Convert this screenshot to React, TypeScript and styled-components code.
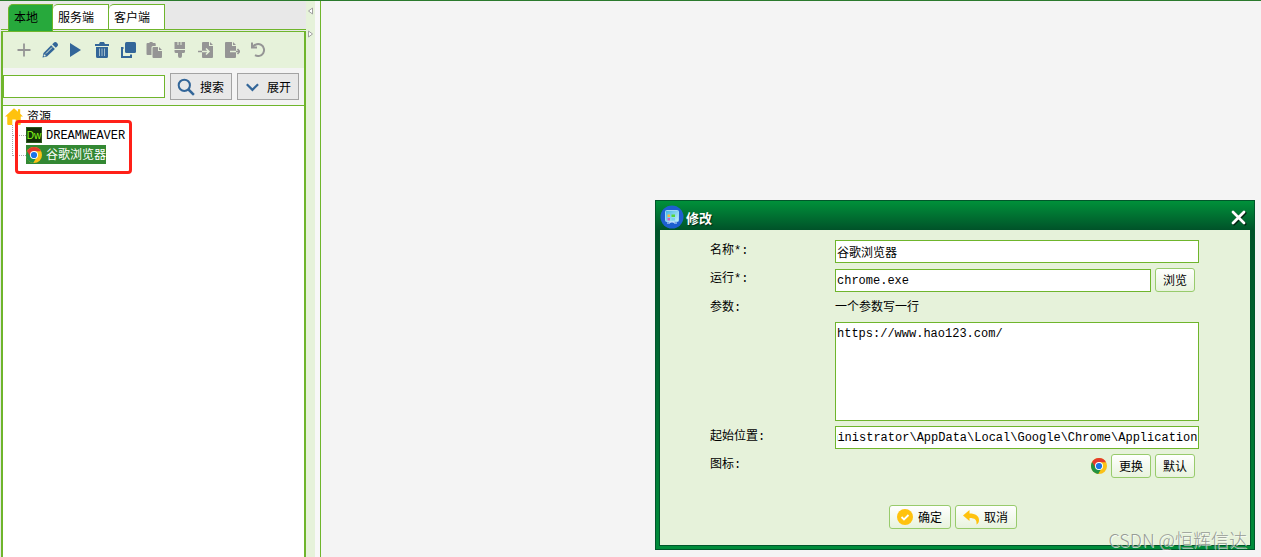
import React, { useEffect, useRef } from "react";
import styled, { createGlobalStyle } from "styled-components";

const GREEN = "#6fb52c";
const PALE = "#e6f2da";
const BLUE = "#336699";
const GREY = "#959595";
const YELLOW = "#ffc20e";

const Global = createGlobalStyle`
  * { box-sizing: border-box; }
  html, body, #root { height: 100%; }
  body {
    margin: 0;
    background: #f4f4f4;
    overflow: hidden;
  }
  body, button, input, textarea {
    font-family: "Liberation Mono", "Noto Sans CJK SC", monospace;
    font-size: 12px;
    color: #000;
  }
  button, input, textarea { margin: 0; border-radius: 0; outline: none; }
`;

const Screen = styled.div`
  display: flex;
  height: 100%;
  min-height: 100vh;
  border-top: 1px solid #2b7a2d;
  position: relative;
`;

const Sidebar = styled.aside`
  flex: 0 0 306px;
  display: flex;
  flex-direction: column;
  padding-left: 1px;
  background: #e8e8e8;
`;

const Tabs = styled.div`
  display: flex;
  height: 29px;
  padding: 3px 0 0 7px;
  border-bottom: 1px solid ${GREEN};
`;

const Tab = styled.button<{ $active?: boolean }>`
  width: ${(p) => (p.$active ? 45 : 56)}px;
  height: ${(p) => (p.$active ? 27 : 25)}px;
  padding: ${(p) => (p.$active ? 1 : 3)}px 0 0 5px;
  text-align: left;
  border: 1px solid ${GREEN};
  border-left-width: ${(p) => (p.$active ? 1 : 0)}px;
  border-bottom: 0;
  border-top-left-radius: 5px;
  background: ${(p) => (p.$active ? "#27a93c" : "#fff")};
  line-height: 20px;
`;

const Panel = styled.section`
  flex: 1;
  display: flex;
  flex-direction: column;
  margin-top: 1px;
  border: solid ${GREEN};
  border-width: 1px 2px 0;
  background: #f4f4f4;
`;

const Toolbar = styled.div`
  display: flex;
  align-items: center;
  height: 36px;
  padding-left: 8px;
  background: ${PALE};
`;

const ToolButton = styled.button`
  display: flex;
  align-items: center;
  justify-content: center;
  width: 26px;
  height: 26px;
  padding: 0;
  border: 0;
  background: none;
`;

const SearchRow = styled.div`
  display: flex;
  align-items: center;
  gap: 5px;
  height: 37px;
  padding-right: 5px;
`;

const TextInput = styled.input`
  flex: 1;
  min-width: 0;
  width: 100%;
  height: 23px;
  padding: 0 1px;
  border: 1px solid ${GREEN};
  background: #fff;
`;

const GreyButton = styled.button`
  display: flex;
  align-items: center;
  gap: 5px;
  width: 62px;
  height: 27px;
  padding: 0 0 0 6px;
  border: 1px solid #a3a3a3;
  background: #e8e8e8;
`;

const Tree = styled.div`
  position: relative;
  flex: 1;
  padding-left: 1px;
  border-top: 1px solid ${GREEN};
  background: #fff;
`;

const TreeRoot = styled.div`
  display: flex;
  align-items: center;
  gap: 4px;
  height: 19px;
  padding-left: 1px;
`;

const TreeList = styled.ul`
  list-style: none;
  margin: 0 0 0 8px;
  padding: 0;
`;

const TreeItem = styled.li`
  display: flex;
  height: 20px;
  &::before {
    content: "";
    width: 13px;
    height: 20px;
    margin-top: -10px;
    border: dotted #a8a8a8;
    border-width: 0 0 1px 1px;
  }
  &:first-child::before {
    height: 10px;
    margin-top: 0;
  }
`;

const TreeLabel = styled.span<{ $selected?: boolean }>`
  display: flex;
  align-items: center;
  gap: 4px;
  height: 19px;
  line-height: 19px;
  color: ${(p) => (p.$selected ? "#fff" : "#000")};
  background: ${(p) => (p.$selected ? "#338833" : "transparent")};
`;

const TreeText = styled.span`
  padding-top: 3px;
`;

const Marker = styled.div`
  position: absolute;
  left: 12px;
  top: 14px;
  width: 117px;
  height: 54px;
  border: 3px solid #ff2018;
  border-radius: 4px;
`;

const Splitter = styled.div`
  flex: 0 0 15px;
  display: flex;
  flex-direction: column;
  align-items: flex-start;
  gap: 15px;
  padding: 6px 0 0 1px;
  border-right: 1px solid ${GREEN};
  background: linear-gradient(90deg, ${PALE} 9px, #f8f8f8 9px);
`;

const SplitButton = styled.button`
  display: flex;
  width: 7px;
  height: 8px;
  padding: 0;
  border: 0;
  background: none;
`;

const Workspace = styled.main`
  flex: 1;
  min-width: 0;
  background: #f4f4f4;
`;

const Dialog = styled.section`
  position: absolute;
  right: 6px;
  top: 199px;
  width: 600px;
  border: 1px solid #00562a;
  background: linear-gradient(#00913a, #005229 29px, #006831 150px, #008c3a 100%);
  padding: 0 3px 3px;
`;

const TitleBar = styled.header`
  display: flex;
  align-items: center;
  gap: 2px;
  height: 29px;
  padding: 3px 4px 0 1px;
`;

const Title = styled.h1`
  flex: 1;
  margin: 0;
  font-size: 13px;
  font-weight: 700;
  color: #fff;
  text-shadow: 1px 1px 1px #002a14;
`;

const CloseButton = styled.button`
  display: flex;
  padding: 1px 0 0;
  border: 0;
  background: none;
`;

const Form = styled.form`
  display: flex;
  flex-direction: column;
  padding: 10px 51px 16px 50px;
  border: 1px solid #00562a;
  border-top: 0;
  background: ${PALE};
`;

const Row = styled.div`
  display: grid;
  grid-template-columns: 125px 1fr;
  align-items: start;
  padding-bottom: 5px;
`;

const Label = styled.label`
  line-height: 22px;
`;

const Field = styled.div<{ $end?: boolean }>`
  display: flex;
  align-items: flex-end;
  justify-content: ${(p) => (p.$end ? "flex-end" : "flex-start")};
  gap: 4px;
  padding-right: ${(p) => (p.$end ? 4 : 0)}px;
`;

const Stack = styled.div`
  display: flex;
  flex-direction: column;
  gap: 3px;
`;

const Hint = styled.span`
  line-height: 22px;
`;

const TextArea = styled.textarea`
  display: block;
  width: 100%;
  height: 99px;
  padding: 4px 1px;
  border: 1px solid ${GREEN};
  background: #fff;
  line-height: 14px;
  resize: none;
`;

const Button = styled.button<{ $wide?: boolean }>`
  display: flex;
  align-items: center;
  justify-content: center;
  gap: 5px;
  width: ${(p) => (p.$wide ? 62 : 40)}px;
  height: 24px;
  padding: 0;
  border: 1px solid #98cb6c;
  border-radius: 3px;
  background: linear-gradient(#ffffff, #e8f3dd);
`;

const IconSlot = styled.span`
  display: flex;
  align-self: center;
`;

const Actions = styled.div`
  display: flex;
  justify-content: center;
  gap: 4px;
  padding: 22px 4px 0 0;
`;

const Watermark = styled.div`
  position: absolute;
  right: 14px;
  bottom: 5px;
  font-family: "Noto Sans CJK SC", sans-serif;
  font-size: 18px;
  font-weight: 300;
  line-height: 26px;
  color: rgba(140, 145, 140, 0.9);
  text-shadow: 1px 1px 0 rgba(255, 255, 255, 0.7);
  white-space: nowrap;
`;

const Icon = ({ children, size = 16 }: { children: React.ReactNode; size?: number }) => (
  <svg width={size} height={size} viewBox="0 0 16 16" fill="none" aria-hidden="true">
    {children}
  </svg>
);

const Chrome = () => (
  <Icon>
    <circle cx="8" cy="8" r="8" fill="#fbc116" />
    <path d="M8 8 1.07 4A8 8 0 0 0 7.2 15.96L11 9.6z" fill="#229342" />
    <path d="M1.07 4A8 8 0 0 1 14.93 4.2H8L4.6 10z" fill="#e33b2e" />
    <circle cx="8" cy="8" r="4" fill="#fff" />
    <circle cx="8" cy="8" r="3.1" fill="#1a73e8" />
  </Icon>
);

const Dreamweaver = () => (
  <svg width="16" height="16" viewBox="0 0 16 16" aria-hidden="true">
    <rect x="0.5" y="0.5" width="15" height="15" fill="#123009" stroke="#2c5a1c" />
    <text x="8" y="11.5" textAnchor="middle" fontFamily="Liberation Sans, sans-serif" fontSize="10" fill="#8cff1a">
      Dw
    </text>
  </svg>
);

const AppLogo = () => (
  <svg width="24" height="24" viewBox="0 0 24 24" aria-hidden="true">
    <defs>
      <linearGradient id="screen" x1="0" y1="0" x2="1" y2="1">
        <stop offset="0" stopColor="#3fb4e8" />
        <stop offset="1" stopColor="#c8f2f4" />
      </linearGradient>
    </defs>
    <circle cx="12" cy="12" r="11.5" fill="#1e5fd0" />
    <rect x="5.5" y="5.5" width="13" height="11" rx="1" fill="url(#screen)" stroke="#9fd8f5" />
    <path d="M7 18h3v-1h4v1h3" stroke="#d6ecff" strokeWidth="1" fill="none" />
    <rect x="7.5" y="9.5" width="2.5" height="2.5" fill="#ffb43a" />
    <rect x="11.5" y="9.500" width="3.500" height="2.500" fill="#54d636" />
    <rect x="7.500" y="13" width="2.500" height="2.500" fill="#d45cc4" />
    <rect x="11.500" y="13" width="3.500" height="2.500" fill="#7ad0f0" />
  </svg>
);

const tools: { name: string; art: React.ReactNode }[] = [
  { name: "新增", art: <path d="M8 1.500v13M1.500 8h13" stroke={GREY} strokeWidth="1.800" /> },
  {
    name: "编辑",
    art: (
      <g>
        <path d="M0.500 15.500 1.500 11 9.200 3.200l3.700 3.700L5 14.500z" fill={BLUE} />
        <path d="m10.200 2.200 1.300-1.300a2.500 2.500 0 0 1 3.600 3.600l-1.300 1.300z" fill={BLUE} />
        <path d="m4 11.500 6-6" stroke={PALE} strokeWidth="1" />
        <circle cx="2.600" cy="13.400" r="1" fill={PALE} />
      </g>
    ),
  },
  { name: "运行", art: <path d="M2 1v14l11-7z" fill={BLUE} /> },
  {
    name: "删除",
    art: (
      <g>
        <path d="M1 2h4l1-2h4l1 2h4v2H1z" fill={BLUE} />
        <path d="M2 5h12v9.500a1.500 1.500 0 0 1-1.500 1.500h-9A1.500 1.500 0 0 1 2 14.500z" fill={BLUE} />
        <path d="M5.500 6.500v7.500M8 6.500v7.500M10.500 6.500v7.500" stroke="#a3bccb" strokeWidth="1" />
      </g>
    ),
  },
  {
    name: "复制",
    art: (
      <g>
        <rect x="5" y="0" width="11" height="11" rx="1.500" fill={BLUE} />
        <path d="M3.500 6h-1.500v9h9v-2.500" stroke={BLUE} strokeWidth="2" />
      </g>
    ),
  },
  {
    name: "粘贴",
    art: (
      <g fill={GREY}>
        <path d="M1.500 1h2a1.600 1.600 0 0 1 3.200 0h2a1 1 0 0 1 1 1v2H7a1.500 1.500 0 0 0-1.500 1.500V13h-4a1 1 0 0 1-1-1V2a1 1 0 0 1 1-1z" />
        <path d="M7.500 5H12v4h4v6a1 1 0 0 1-1 1H7.500a1 1 0 0 1-1-1V6a1 1 0 0 1 1-1z" />
        <path d="M13 5v3h3z" />
      </g>
    ),
  },
  {
    name: "格式",
    art: (
      <g fill={GREY}>
        <path d="M2.500 0h3v3h1V0h2v3h1V0h3.500v7H2.500z" />
        <path d="M2.500 8H13v1.500a1.500 1.500 0 0 1-1.500 1.500H10v3a2 2 0 0 1-4 0v-3H4a1.500 1.500 0 0 1-1.500-1.500z" />
      </g>
    ),
  },
  {
    name: "导入",
    art: (
      <g>
        <path d="M5 0h6v4h4v11a1 1 0 0 1-1 1H5a1 1 0 0 1-1-1V1a1 1 0 0 1 1-1z" fill={GREY} />
        <path d="M12 0v3h3z" fill={GREY} />
        <path d="M4 9.500h6.500M8 6.500l3 3-3 3" stroke={PALE} strokeWidth="1.500" />
        <path d="M0 9.500h4" stroke={GREY} strokeWidth="1.500" />
      </g>
    ),
  },
  {
    name: "导出",
    art: (
      <g>
        <path d="M2 0h6v4h4v11a1 1 0 0 1-1 1H2a1 1 0 0 1-1-1V1a1 1 0 0 1 1-1z" fill={GREY} />
        <path d="M9 0v3h3z" fill={GREY} />
        <path d="M6 9.500h6" stroke={PALE} strokeWidth="1.500" />
        <path d="M12 9.500h3.500M13.500 7l2.200 2.500-2.200 2.500" stroke={GREY} strokeWidth="1.500" />
      </g>
    ),
  },
  {
    name: "撤销",
    art: (
      <g>
        <path d="M3 4.800A6 6 0 1 1 5 13.200" stroke={GREY} strokeWidth="2" />
        <path d="M2 0.500v5h5" stroke={GREY} strokeWidth="2" />
      </g>
    ),
  },
];

export default function App() {
  const pathRef = useRef<HTMLInputElement>(null);

  // Keep the tail of a long directory in view.
  useEffect(() => {
    const el = pathRef.current;
    if (el) el.scrollLeft = el.scrollWidth;
  }, []);

  return (
    <>
      <Global />
      <Screen>
        <Sidebar>
          <Tabs role="tablist">
            <Tab role="tab" aria-selected="true" $active>本地</Tab>
            <Tab role="tab" aria-selected="false">服务端</Tab>
            <Tab role="tab" aria-selected="false">客户端</Tab>
          </Tabs>
          <Panel>
            <Toolbar>
              {tools.map((t) => (
                <ToolButton key={t.name} aria-label={t.name}>
                  <Icon>{t.art}</Icon>
                </ToolButton>
              ))}
            </Toolbar>
            <SearchRow>
              <TextInput aria-label="搜索" />
              <GreyButton>
                <Icon size={18}>
                  <circle cx="6.500" cy="6.500" r="5" stroke={BLUE} strokeWidth="1.800" />
                  <path d="m10 10 5 5" stroke={BLUE} strokeWidth="2.200" />
                </Icon>
                搜索
              </GreyButton>
              <GreyButton>
                <Icon size={18}>
                  <path d="m2.500 5.500 5 5 5-5" stroke={BLUE} strokeWidth="2" />
                </Icon>
                展开
              </GreyButton>
            </SearchRow>
            <Tree>
              <TreeRoot>
                <Icon size={18}>
                  <path d="M8 1 0 8.500h2V15a1 1 0 0 0 1 1h3.500v-5h3v5H13a1 1 0 0 0 1-1V8.500h2L13.500 6V2h-2v2.200z" fill={YELLOW} />
                </Icon>
                资源
              </TreeRoot>
              <TreeList>
                <TreeItem>
                  <TreeLabel><Dreamweaver /><TreeText>DREAMWEAVER</TreeText></TreeLabel>
                </TreeItem>
                <TreeItem>
                  <TreeLabel $selected><Chrome /><TreeText>谷歌浏览器</TreeText></TreeLabel>
                </TreeItem>
              </TreeList>
              <Marker />
            </Tree>
          </Panel>
        </Sidebar>

        <Splitter>
          <SplitButton aria-label="收起">
            <svg width="7" height="8" viewBox="0 0 7 8"><path d="M5.500 1v6L1.500 4z" fill="#fff" stroke="#a0a0a0" /></svg>
          </SplitButton>
          <SplitButton aria-label="展开侧栏">
            <svg width="7" height="8" viewBox="0 0 7 8"><path d="M1.500 1v6l4-3z" fill="#fff" stroke="#a0a0a0" /></svg>
          </SplitButton>
        </Splitter>

        <Workspace />

        <Dialog role="dialog" aria-labelledby="dialog-title">
          <TitleBar>
            <AppLogo />
            <Title id="dialog-title">修改</Title>
            <CloseButton aria-label="关闭">
              <Icon>
                <path d="m3 3 11 11M14 3 3 14" stroke="#00200e" strokeWidth="3" strokeLinecap="round" />
                <path d="m2 2 11 11M13 2 2 13" stroke="#fff" strokeWidth="2.800" strokeLinecap="round" />
              </Icon>
            </CloseButton>
          </TitleBar>
          <Form onSubmit={(e) => e.preventDefault()}>
            <Row>
              <Label htmlFor="name">名称*:</Label>
              <Field><TextInput id="name" defaultValue="谷歌浏览器" /></Field>
            </Row>
            <Row>
              <Label htmlFor="run">运行*:</Label>
              <Field $end>
                <TextInput id="run" defaultValue="chrome.exe" />
                <Button type="button">浏览</Button>
              </Field>
            </Row>
            <Row>
              <Label htmlFor="args">参数:</Label>
              <Stack>
                <Hint>一个参数写一行</Hint>
                <TextArea id="args" spellCheck={false} defaultValue="https://www.hao123.com/" />
              </Stack>
            </Row>
            <Row>
              <Label htmlFor="start">起始位置:</Label>
              <Field>
                <TextInput
                  id="start"
                  ref={pathRef}
                  defaultValue={"C:\\Users\\Administrator\\AppData\\Local\\Google\\Chrome\\Application"}
                />
              </Field>
            </Row>
            <Row>
              <Label as="span">图标:</Label>
              <Field $end>
                <IconSlot><Chrome /></IconSlot>
                <Button type="button">更换</Button>
                <Button type="button">默认</Button>
              </Field>
            </Row>
            <Actions>
              <Button type="submit" $wide>
                <Icon>
                  <circle cx="8" cy="8" r="8" fill={YELLOW} />
                  <path d="m4.500 8 2.500 2.500 4.500-4.500" stroke="#fff" strokeWidth="1.800" />
                </Icon>
                确定
              </Button>
              <Button type="button" $wide>
                <Icon>
                  <path d="M0 6.500 6.500 1v3.500C12.500 4.500 16 7 16 11c0 2-.8 3.500-2.500 4.500C14 11 12 9 6.500 9v3z" fill={YELLOW} />
                </Icon>
                取消
              </Button>
            </Actions>
          </Form>
        </Dialog>

        <Watermark>CSDN @恒辉信达</Watermark>
      </Screen>
    </>
  );
}
